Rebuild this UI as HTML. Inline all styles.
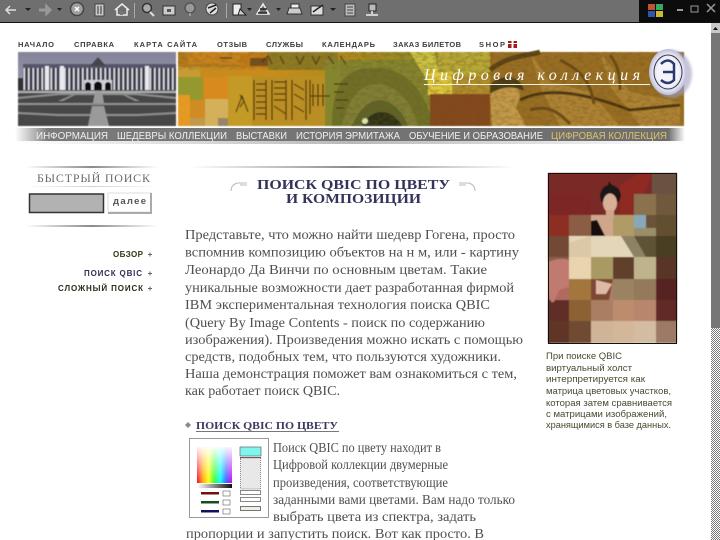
<!DOCTYPE html>
<html><head><meta charset="utf-8"><style>
html,body{margin:0;padding:0;background:#fff;overflow:hidden}
svg{display:block}
.b{font-family:"Liberation Serif",serif;font-size:14px;fill:#505050}
.t{font-family:"Liberation Sans",sans-serif;font-size:7.500px;font-weight:bold;fill:#3c3c3c}
.n{font-family:"Liberation Sans",sans-serif;font-size:10px;fill:#f0f0f0}
.c{font-family:"Liberation Sans",sans-serif;font-size:9px;fill:#4a4a30}
.h{font-family:"Liberation Serif",serif;font-size:14px;font-weight:bold;fill:#33335a}
.m{font-family:"Liberation Sans",sans-serif;font-size:8px;font-weight:bold}
</style></head><body>
<svg width="720" height="540" viewBox="0 0 720 540" xmlns="http://www.w3.org/2000/svg">
<defs>
<filter id="bl" x="-5%" y="-5%" width="110%" height="110%"><feGaussianBlur stdDeviation="0.6"/></filter>
<filter id="bl2" x="-5%" y="-5%" width="110%" height="110%"><feGaussianBlur stdDeviation="1.4"/></filter>
<filter id="tb"><feGaussianBlur stdDeviation="0.35"/></filter>
<filter id="noise" x="0" y="0" width="100%" height="100%"><feTurbulence type="fractalNoise" baseFrequency="0.18 0.3" numOctaves="3" seed="7"/><feColorMatrix values="0 0 0 0 0.16  0 0 0 0 0.1  0 0 0 0 0.02  1.8 0 0 0 -0.7"/></filter>
<linearGradient id="nav" x1="0" x2="1" y1="0" y2="0"><stop offset="0" stop-color="#fff"/><stop offset=".05" stop-color="#7a7a7a"/><stop offset=".975" stop-color="#6e6e6e"/><stop offset="1" stop-color="#fff"/></linearGradient>
<linearGradient id="rule" x1="0" x2="1" y1="0" y2="0"><stop offset="0" stop-color="#fff"/><stop offset=".5" stop-color="#8a8a8a"/><stop offset="1" stop-color="#fff"/></linearGradient>
<linearGradient id="sky" x1="0" x2="0" y1="0" y2="1"><stop offset="0" stop-color="#83839a"/><stop offset="1" stop-color="#b0b0bc"/></linearGradient>
<linearGradient id="ban" x1="0" x2="1" y1="0" y2="0"><stop offset="0" stop-color="#c88a20"/><stop offset=".18" stop-color="#c88c1c"/><stop offset=".36" stop-color="#a88a1e"/><stop offset=".5" stop-color="#8d8a2a"/><stop offset=".58" stop-color="#c0b030"/><stop offset=".64" stop-color="#8a5a1c"/><stop offset=".8" stop-color="#a67420"/><stop offset="1" stop-color="#8f6a20"/></linearGradient>
<linearGradient id="spx" x1="0" x2="1" y1="0" y2="0"><stop offset="0" stop-color="#f03"/><stop offset=".17" stop-color="#fa0"/><stop offset=".33" stop-color="#ff0"/><stop offset=".5" stop-color="#3f3"/><stop offset=".67" stop-color="#0ff"/><stop offset=".83" stop-color="#36f"/><stop offset="1" stop-color="#c0f"/></linearGradient>
<linearGradient id="spy" x1="0" x2="0" y1="0" y2="1"><stop offset="0" stop-color="#fff" stop-opacity=".95"/><stop offset="1" stop-color="#fff" stop-opacity="0"/></linearGradient>
<linearGradient id="gry" x1="0" x2="1" y1="0" y2="0"><stop offset="0" stop-color="#fff"/><stop offset="1" stop-color="#111"/></linearGradient>
<radialGradient id="logo" cx=".5" cy=".5" r=".55"><stop offset="0" stop-color="#fff"/><stop offset=".7" stop-color="#e8e8f4"/><stop offset="1" stop-color="#a8a8d0"/></radialGradient>
<pattern id="chk" width="2" height="2" patternUnits="userSpaceOnUse"><rect width="2" height="2" fill="#fff"/><rect width="1" height="1" fill="#777"/><rect x="1" y="1" width="1" height="1" fill="#777"/></pattern>
<pattern id="col" width="4.500" height="20" patternUnits="userSpaceOnUse"><rect width="4.500" height="20" fill="#3e3e4a"/><rect x="1" width="1.600" height="20" fill="#dcdce4"/></pattern>
</defs>
<rect width="720" height="540" fill="#fff"/>

<!-- toolbar -->
<rect width="720" height="22" fill="#6f6f6f"/>
<rect y="22" width="720" height="1" fill="#111"/>
<rect x="639" width="81" height="22" fill="#0c0c0c"/>
<g fill="none" stroke="#ddd" stroke-width="1.500" filter="url(#tb)">
<path d="M16 10h-9M10 6l-4 4 4 4M7 10h9"/>
<path d="M39 10h8" stroke="#999" stroke-width="3"/><path d="M46 5l5 5-5 5z" fill="#999" stroke="#999"/>
<circle cx="77" cy="9" r="6.500" fill="#a0a0a0" stroke="#444"/><path d="M75 7l4 4M79 7l-4 4" stroke="#fff"/>
<rect x="95" y="4" width="9" height="12" fill="#c8c8c8" stroke="#444" stroke-width="1"/><path d="M98 6v8M101 6v8" stroke="#333" stroke-width="1"/>
<path d="M115 10l7-6 7 6M117 9v6h10V9" stroke="#eee"/><rect x="120" y="11" width="3" height="4" fill="#777" stroke="none"/>
<circle cx="147" cy="8" r="4.500" fill="#aaa" stroke="#333"/><path d="M150 12l4 4" stroke="#ddd" stroke-width="2"/>
<rect x="163" y="6" width="12" height="9" fill="#ccc" stroke="#333" stroke-width="1"/><rect x="167" y="9" width="4" height="3" fill="#555" stroke="none"/>
<circle cx="190" cy="8" r="5" fill="#999" stroke="#555"/><path d="M190 13v3" stroke="#aaa"/>
<circle cx="212" cy="9" r="6" fill="#ddd" stroke="#444" stroke-width="1"/><path d="M208 8l8-3M210 13l6-5" stroke="#222"/>
<rect x="233" y="4" width="8" height="11" fill="#eee" stroke="#222" stroke-width="1"/><path d="M240 9l6 6h-8z" fill="#ccc" stroke="#222" stroke-width="1"/>
<path d="M263 4l-6 10h12z" fill="none" stroke="#eee"/><path d="M260 9h7M258 13h9" stroke="#222"/>
<path d="M289 8h11l2 6h-15z" fill="#ccc" stroke="#333" stroke-width="1"/><rect x="291" y="4" width="8" height="4" fill="#eee" stroke="#333" stroke-width="1"/>
<rect x="311" y="6" width="12" height="9" fill="#ddd" stroke="#333" stroke-width="1"/><path d="M313 12l4-3 6-4" stroke="#222"/>
<rect x="345" y="4" width="10" height="12" fill="#bbb" stroke="#444" stroke-width="1"/><path d="M347 7h6M347 10h6M347 13h6" stroke="#444" stroke-width="1"/>
<rect x="369" y="4" width="7" height="7" fill="#bbb" stroke="#222" stroke-width="1"/><path d="M372 11v3M366 15h12" stroke="#eee"/>
</g>
<path d="M25 8h6l-3 3zM57 8h5l-2.500 3zM247 8h5l-2.500 3zM276 8h5l-2.500 3zM330 8h6l-3 3z" fill="#222"/>
<rect x="134" y="3" width="1" height="15" fill="#aaa"/><rect x="226" y="3" width="1" height="15" fill="#aaa"/>
<g filter="url(#tb)"><rect x="648" y="4" width="7" height="6" fill="#b53"/><rect x="656" y="4" width="7" height="6" fill="#3a6"/><rect x="648" y="11" width="7" height="6" fill="#35a"/><rect x="656" y="11" width="7" height="6" fill="#cb3"/>
<path d="M677 10h6" stroke="#999" stroke-width="2"/><rect x="691" y="6" width="7" height="6" fill="none" stroke="#999"/><path d="M707 4l8 8M715 4l-8 8" stroke="#999" stroke-width="1.500"/></g>

<!-- scrollbar -->
<rect x="711" y="23" width="9" height="305" fill="#777"/>
<rect x="711" y="328" width="9" height="212" fill="url(#chk)"/>
<rect x="711" y="23" width="9" height="10" fill="#c8c8c8"/><path d="M713 30h5l-2.500-3z" fill="#111"/>

<!-- top links -->
<g filter="url(#tb)">
<text x="18" y="47" textLength="36" class="t">НАЧАЛО</text>
<text x="74" y="47" textLength="40" class="t">СПРАВКА</text>
<text x="134" y="47" textLength="63" class="t">КАРТА САЙТА</text>
<text x="217" y="47" textLength="30" class="t">ОТЗЫВ</text>
<text x="266" y="47" textLength="37" class="t">СЛУЖБЫ</text>
<text x="322" y="47" textLength="53" class="t">КАЛЕНДАРЬ</text>
<text x="393" y="47" textLength="68" class="t">ЗАКАЗ БИЛЕТОВ</text>
<text x="479" y="47" textLength="26" class="t">SHOP</text>
</g>
<rect x="508" y="41" width="9" height="7" fill="#a51c1c"/><rect x="511.500" y="39" width="2" height="9" fill="#fff"/><rect x="508" y="43" width="9" height="1" fill="#fff"/>

<!-- left photo -->
<g filter="url(#bl)">
<rect x="18" y="52" width="158" height="74" fill="url(#sky)"/>
<rect x="23" y="66" width="153" height="24" fill="url(#col)"/>
<rect x="23" y="64" width="153" height="4" fill="#55556a"/>
<path d="M90 66l8-9 8 9z" fill="#444"/>
<rect x="45" y="66" width="4" height="24" fill="#e8e8ee"/><rect x="60" y="66" width="4" height="24" fill="#e8e8ee"/><rect x="145" y="66" width="4" height="24" fill="#e8e8ee"/>
<rect x="18" y="78" width="5" height="12" fill="#333"/>
<rect x="84" y="80" width="28" height="10" fill="#d0d0d8"/>
<path d="M85 90v-6q3-4 6 0v6zM94 90v-6q4-5 8 0v6zM105 90v-6q3-4 6 0v6z" fill="#0d0d0d"/>
<rect x="18" y="90" width="158" height="36" fill="#464646"/>
<g fill="#8e8e8e"><rect x="18" y="91" width="158" height="2" fill="#b0b0b0"/><path d="M18 97L60 93h76l40 4v2l-40-4H60L18 99z"/><path d="M18 103h158v2H18zM18 112l40 2h80l38-2v2l-38 2H58l-40-2z"/>
<path d="M58 101l14-6h3l-12 6zM140 101l-14-6h-3l12 6z"/></g>
<path d="M95 92h7l2 11h-11zM92 106h12l5 20H88z" fill="#9a9a9a"/>
</g>

<!-- right banner -->
<g filter="url(#bl)">
<rect x="178" y="52" width="506" height="74" fill="url(#ban)"/>
<rect x="178" y="52" width="100" height="15" fill="#b07a1c"/>
<rect x="188" y="52" width="60" height="12" fill="#c8821e"/><rect x="240" y="54" width="28" height="14" fill="#c27a18"/><rect x="250" y="58" width="20" height="8" fill="#75501c"/>
<rect x="178" y="67" width="22" height="10" fill="#c89a30"/><rect x="178" y="77" width="25" height="25" fill="#94982e"/><rect x="178" y="95" width="12" height="31" fill="#e49a20"/><rect x="190" y="100" width="14" height="18" fill="#d08c22"/><rect x="190" y="118" width="16" height="8" fill="#c09a4a"/>
<rect x="204" y="77" width="24" height="22" fill="#d88a1a"/><rect x="205" y="99" width="28" height="27" fill="#d4b05a"/><rect x="218" y="118" width="16" height="8" fill="#9a8466"/>
<rect x="228" y="76" width="24" height="50" fill="#c49a28"/>
<rect x="252" y="76" width="110" height="50" fill="#ba8e20"/>
<rect x="268" y="52" width="70" height="18" fill="#8e7a20"/>
<rect x="325" y="60" width="110" height="66" fill="#84852e"/>
<path d="M332 126c0-60 28-58 46-58s46 12 55 58z" fill="#6e7028"/>
<path d="M342 126c8-36 24-42 36-42s32 10 40 42z" fill="#7f8034"/>
<path d="M352 126c8-20 20-26 28-26s22 8 28 26z" fill="#5f6428"/>
<path d="M362 126c6-10 12-14 20-14s16 6 20 14z" fill="#2f3018"/>
<circle cx="365" cy="121" r="3" fill="#dfe6b0"/>
<path d="M410 52h25l5 30h-12z" fill="#c8c040"/>
<rect x="428" y="70" width="25" height="25" fill="#e0c83a"/>
<rect x="430" y="94" width="62" height="32" fill="#84461c"/>
<rect x="438" y="52" width="55" height="20" fill="#b8a836"/>
<rect x="452" y="76" width="40" height="18" fill="#b28e2a"/>
<rect x="490" y="52" width="194" height="74" fill="#9a6e20"/>
<path d="M490 92c10-14 28-14 30 4l-4 12 10 18h-34z" fill="#c49a48"/>
<path d="M490 85c10-12 32-10 34 6-10-5-22-5-34 3z" fill="#4a3a18"/>
<path d="M530 52l20 30 40 10 30 34h-60l-20-40zM600 52l30 40 50 10v24h-40l-30-40z" fill="#ae8230"/>
<path d="M520 100c30-15 70-5 110 10l50-5" stroke="#4a3210" stroke-width="3" fill="none"/>
<path d="M560 60c20 10 30 20 34 44M610 55c8 10 10 20 10 35M530 110c20-6 30 4 40 14" stroke="#6a4a18" stroke-width="3" fill="none"/>
<path d="M490 70c20-16 40-14 50-18" stroke="#5a4214" stroke-width="5" fill="none"/>
</g>
<g filter="url(#bl)" stroke="#3b2a0e" fill="none" stroke-width="1" opacity=".85">
<path d="M254 80v40M256 84h10M256 90h10M256 96h10M256 102h10M256 108h10M256 114h10M266 80v40"/>
<path d="M272 80v40M274 82h12M274 88h12M274 94h12M274 100h12M274 106l12 8M286 80v40"/>
<path d="M292 80v40M294 84l10 6M294 94l10 6M294 106l10 6M306 80v40"/>
<path d="M310 80v34M313 84v22M318 84v22M323 84v22M310 96h20"/>
<path d="M240 95l4 6-4 6M236 112l6-16 6 16"/>
<path d="M262 62l6-6 4 8M280 56l4 8M296 56l4 8 4-8M312 56l4 8 4-8M328 56l6 8M220 58h12M340 56l6 8"/>
<path d="M334 84h14M334 92h10M336 100h12M336 108h8"/>
</g>
<rect x="340" y="52" width="344" height="74" filter="url(#noise)" opacity=".55"/>
<rect x="178" y="52" width="160" height="18" filter="url(#noise)" opacity=".4"/>
<text x="424" y="80" textLength="216" style="font-family:'Liberation Serif',serif;font-style:italic;font-size:16px" fill="#fff">Цифровая коллекция</text>
<rect x="424" y="84" width="226" height="1" fill="#f2f2e6"/>
<ellipse cx="672" cy="74" rx="20" ry="24" fill="#a0a0c4" opacity=".6" filter="url(#bl2)"/>
<ellipse cx="668" cy="72" rx="19" ry="23" fill="url(#logo)"/>
<ellipse cx="668" cy="72" rx="14" ry="17" fill="none" stroke="#334" stroke-width="1"/>
<ellipse cx="668" cy="72" rx="11" ry="14" fill="#f4f4fa"/>
<path d="M661 64q7-7 13 0v16q-6 6-13 0M663 72h11" fill="none" stroke="#2a3a70" stroke-width="2.500"/>

<!-- nav bar -->
<rect x="15" y="128" width="670" height="13" fill="url(#nav)"/>
<rect x="15" y="141" width="670" height="3" fill="url(#rule)" opacity=".6"/>
<g filter="url(#tb)">
<text class="n" x="36" y="139" textLength="72" lengthAdjust="spacingAndGlyphs">ИНФОРМАЦИЯ</text>
<text class="n" x="117" y="139" textLength="110" lengthAdjust="spacingAndGlyphs">ШЕДЕВРЫ КОЛЛЕКЦИИ</text>
<text class="n" x="236" y="139" textLength="51" lengthAdjust="spacingAndGlyphs">ВЫСТАВКИ</text>
<text class="n" x="296" y="139" textLength="104" lengthAdjust="spacingAndGlyphs">ИСТОРИЯ ЭРМИТАЖА</text>
<text class="n" x="409" y="139" textLength="134" lengthAdjust="spacingAndGlyphs">ОБУЧЕНИЕ И ОБРАЗОВАНИЕ</text>
<text class="n" x="551" y="139" textLength="116" style="fill:#dcc06a" lengthAdjust="spacingAndGlyphs">ЦИФРОВАЯ КОЛЛЕКЦИЯ</text>
</g>

<!-- left column -->
<rect x="25" y="166" width="133" height="2" fill="url(#rule)"/>
<rect x="25" y="186" width="133" height="1" fill="url(#rule)" opacity=".4"/>
<text x="37" y="182" textLength="113" style="font-family:'Liberation Serif',serif;font-size:12px" fill="#6c6c6c" filter="url(#tb)">БЫСТРЫЙ ПОИСК</text>
<rect x="29.500" y="194" width="74" height="18.500" fill="#b2b2b2" stroke="#333" stroke-width="1.500"/>
<rect x="108" y="193" width="43" height="19" fill="#fff" stroke="#ddd"/>
<path d="M151 193v20h-43" fill="none" stroke="#aaa" stroke-width="2"/>
<text x="113" y="204" textLength="33" style="font-family:'Liberation Sans',sans-serif;font-size:9.500px;font-weight:bold" fill="#555" filter="url(#tb)">далее</text>
<rect x="25" y="225" width="133" height="2" fill="url(#rule)"/>
<g filter="url(#tb)">
<text class="m" x="113" y="257" textLength="30" fill="#333318">ОБЗОР</text>
<text class="m" x="84" y="276" textLength="58" fill="#2f2f55">ПОИСК QBIC</text>
<text class="m" x="58" y="291" textLength="85" fill="#2c2c1c">СЛОЖНЫЙ ПОИСК</text>
<path d="M148 254.500h4M150 252.500v4M148 273.500h4M150 271.500v4M148 288.500h4M150 286.500v4" stroke="#666" fill="none"/>
</g>

<!-- heading -->
<rect x="190" y="166" width="325" height="2" fill="url(#rule)"/>
<g filter="url(#tb)">
<text class="h" x="257" y="189" textLength="193" lengthAdjust="spacingAndGlyphs">ПОИСК QBIC ПО ЦВЕТУ</text>
<text class="h" x="286" y="203" textLength="135" lengthAdjust="spacingAndGlyphs">И КОМПОЗИЦИИ</text>
</g>
<path d="M247 183h-10q-6 2-6 8M459 183h10q6 2 6 8M240 185h7M459 185h7" fill="none" stroke="#bbb"/>

<!-- body text -->
<g filter="url(#tb)">
<text class="b" x="185" y="239" textLength="330" lengthAdjust="spacingAndGlyphs">Представьте, что можно найти шедевр Гогена, просто</text>
<text class="b" x="185" y="256.500" textLength="334" lengthAdjust="spacingAndGlyphs">вспомнив композицию объектов на н м, или - картину</text>
<text class="b" x="185" y="274" textLength="302" lengthAdjust="spacingAndGlyphs">Леонардо Да Винчи по основным цветам. Такие</text>
<text class="b" x="185" y="292" textLength="329" lengthAdjust="spacingAndGlyphs">уникальные возможности дает разработанная фирмой</text>
<text class="b" x="185" y="309" textLength="305" lengthAdjust="spacingAndGlyphs">IBM экспериментальная технология поиска QBIC</text>
<text class="b" x="185" y="327" textLength="300" lengthAdjust="spacingAndGlyphs">(Query By Image Contents - поиск по содержанию</text>
<text class="b" x="185" y="344" textLength="338" lengthAdjust="spacingAndGlyphs">изображения). Произведения можно искать с помощью</text>
<text class="b" x="185" y="361" textLength="316" lengthAdjust="spacingAndGlyphs">средств, подобных тем, что пользуются художники.</text>
<text class="b" x="185" y="378" textLength="332" lengthAdjust="spacingAndGlyphs">Наша демонстрация поможет вам ознакомиться с тем,</text>
<text class="b" x="185" y="395" textLength="155" lengthAdjust="spacingAndGlyphs">как работает поиск QBIC.</text>
</g>

<!-- subhead -->
<path d="M188 422l3 3-3 3-3-3z" fill="#8a8a8a"/>
<text x="196" y="429" textLength="142" lengthAdjust="spacingAndGlyphs" style="font-family:'Liberation Serif',serif;font-size:11px;font-weight:bold" fill="#3a3a60" filter="url(#tb)">ПОИСК QBIC ПО ЦВЕТУ</text>
<rect x="196" y="431" width="143" height="1" fill="#777"/>

<!-- thumb -->
<rect x="189.500" y="438.500" width="79" height="79" fill="#fff" stroke="#999"/>
<rect x="197" y="447" width="35" height="36" fill="url(#spx)"/>
<rect x="197" y="447" width="35" height="36" fill="url(#spy)"/>
<rect x="197" y="484" width="35" height="4" fill="url(#gry)"/>
<rect x="240" y="447" width="21" height="9" fill="#7ff5ee" stroke="#666" stroke-width=".7"/>
<rect x="240" y="457" width="21" height="2" fill="#555"/>
<rect x="240.500" y="458" width="20" height="31" fill="#e8e8e8" stroke="#888" stroke-dasharray="1 1"/>
<rect x="240.500" y="490.500" width="20" height="4" fill="#fff" stroke="#888"/>
<rect x="240.500" y="497.500" width="20" height="4" fill="#fff" stroke="#888"/>
<rect x="240.500" y="506.500" width="20" height="4" fill="#eee" stroke="#776"/>
<rect x="201" y="492" width="18" height="2.500" fill="#701010"/><rect x="201" y="501" width="18" height="2.500" fill="#105020"/><rect x="201" y="510" width="18" height="2.500" fill="#101060"/>
<rect x="223" y="491" width="7" height="5" fill="#fff" stroke="#777" stroke-width=".7"/><rect x="223" y="500" width="7" height="5" fill="#fff" stroke="#777" stroke-width=".7"/><rect x="223" y="509" width="7" height="5" fill="#fff" stroke="#777" stroke-width=".7"/>

<g filter="url(#tb)">
<text class="b" x="273" y="452" textLength="168" lengthAdjust="spacingAndGlyphs">Поиск QBIC по цвету находит в</text>
<text class="b" x="273" y="469" textLength="175" lengthAdjust="spacingAndGlyphs">Цифровой коллекции двумерные</text>
<text class="b" x="273" y="487" textLength="175" lengthAdjust="spacingAndGlyphs">произведения, соответствующие</text>
<text class="b" x="273" y="504" textLength="242" lengthAdjust="spacingAndGlyphs">заданными вами цветами. Вам надо только</text>
<text class="b" x="273" y="521" textLength="203" lengthAdjust="spacingAndGlyphs">выбрать цвета из спектра, задать</text>
<text class="b" x="186" y="538" textLength="298" lengthAdjust="spacingAndGlyphs">пропорции и запустить поиск. Вот как просто. В</text>
</g>

<!-- painting -->
<g filter="url(#bl)">
<rect x="548" y="173" width="129" height="170" fill="#7a2a26"/>
<path d="M652 173h25v21h-25z" fill="#6b5142"/>
<path d="M620 185l20-12 12 0-8 22-10 20h-14z" fill="#8f2a24"/>
<rect x="548" y="194" width="43" height="21" fill="#7d2825"/>
<rect x="634" y="194" width="22" height="21" fill="#8a7250"/><rect x="656" y="194" width="21" height="21" fill="#70593e"/>
<rect x="548" y="215" width="21" height="21" fill="#8c2d24"/><rect x="569" y="215" width="22" height="21" fill="#8c5d44"/>
<rect x="591" y="215" width="22" height="21" fill="#cfa68c"/>
<rect x="613" y="215" width="21" height="21" fill="#b09a66"/><rect x="634" y="215" width="22" height="21" fill="#9a8f6a"/><rect x="656" y="215" width="21" height="21" fill="#625033"/>
<rect x="548" y="236" width="21" height="21" fill="#734a34"/><rect x="634" y="236" width="22" height="21" fill="#5f5236"/><rect x="656" y="236" width="21" height="21" fill="#4a3e22"/>
<rect x="569" y="236" width="65" height="21" fill="#e4d6b8"/>
<rect x="548" y="257" width="21" height="22" fill="#8a5f4c"/><rect x="569" y="257" width="22" height="22" fill="#e8d4ae"/><rect x="591" y="257" width="22" height="22" fill="#a89a62"/><rect x="613" y="257" width="21" height="22" fill="#60402c"/><rect x="634" y="257" width="22" height="22" fill="#bfb38c"/><rect x="656" y="257" width="21" height="22" fill="#583526"/>
<rect x="548" y="279" width="21" height="21" fill="#b06a60"/><rect x="569" y="279" width="22" height="21" fill="#a2763e"/><rect x="591" y="279" width="22" height="21" fill="#b07c6a"/><rect x="613" y="279" width="21" height="21" fill="#9b8260"/><rect x="634" y="279" width="22" height="21" fill="#947a5a"/><rect x="656" y="279" width="21" height="21" fill="#572420"/>
<rect x="548" y="300" width="21" height="21" fill="#602e26"/><rect x="569" y="300" width="22" height="21" fill="#8c6236"/><rect x="591" y="300" width="22" height="21" fill="#aa7e62"/><rect x="613" y="300" width="21" height="21" fill="#bd8c6e"/><rect x="634" y="300" width="22" height="21" fill="#b8866c"/><rect x="656" y="300" width="21" height="21" fill="#622a26"/>
<rect x="548" y="321" width="21" height="22" fill="#613528"/><rect x="569" y="321" width="22" height="22" fill="#6f4c30"/><rect x="591" y="321" width="22" height="22" fill="#d0b498"/><rect x="613" y="321" width="21" height="22" fill="#d4b698"/><rect x="634" y="321" width="22" height="22" fill="#d4bca2"/><rect x="656" y="321" width="21" height="22" fill="#9c7a66"/>
<path d="M600 196q1-9 8-11l1-4 3 4q8 2 9 11l-2 6-18 0z" fill="#1e1616"/>
<ellipse cx="610" cy="203" rx="7" ry="9.500" fill="#d8b098"/>
<rect x="606" y="210" width="8" height="8" fill="#cfa68c"/>
<path d="M591 221l6-1 8 16h-14z" fill="#141010"/>
<rect x="634" y="215" width="12" height="13" fill="#86a8b8"/>
<rect x="646" y="215" width="10" height="13" fill="#6a5238"/>
<path d="M621 236h13l12 21h-12z" fill="#8e8266"/>
<path d="M569 243l22-7v21l-22 0z" fill="#dcc8a4"/>
<path d="M548 262q12-5 21-2v27l-10 3-5 12h-3l-3-14z" fill="#c07a70"/>
<path d="M591 279h22l-4 21h-18z" fill="#7d4a30"/><path d="M596 280l16 4-6 10h-10z" fill="#e0b8a8"/>
</g>
<rect x="548.500" y="173.500" width="128" height="170" fill="none" stroke="#111"/>

<!-- caption -->
<g filter="url(#tb)">
<text class="c" x="546" y="359" textLength="76" lengthAdjust="spacingAndGlyphs">При поиске QBIC</text>
<text class="c" x="546" y="371" textLength="86" lengthAdjust="spacingAndGlyphs">виртуальный холст</text>
<text class="c" x="546" y="382" textLength="99" lengthAdjust="spacingAndGlyphs">интерпретируется как</text>
<text class="c" x="546" y="394" textLength="125" lengthAdjust="spacingAndGlyphs">матрица цветовых участков,</text>
<text class="c" x="546" y="406" textLength="126" lengthAdjust="spacingAndGlyphs">которая затем сравнивается</text>
<text class="c" x="546" y="417" textLength="121" lengthAdjust="spacingAndGlyphs">с матрицами изображений,</text>
<text class="c" x="546" y="428" textLength="125" lengthAdjust="spacingAndGlyphs">хранящимися в базе данных.</text>
</g>
</svg>
</body></html>
